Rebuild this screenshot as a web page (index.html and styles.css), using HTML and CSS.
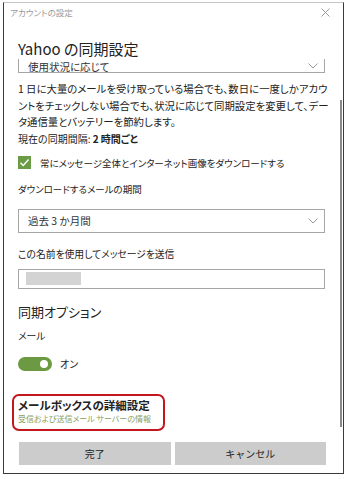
FILE: index.html
```html
<!DOCTYPE html>
<html lang="ja">
<head>
<meta charset="utf-8">
<title>アカウントの設定</title>
<link rel="stylesheet" href="styles.css">
</head>
<body>
<div class="window">
  <div class="titlebar">
    <span class="title">アカウントの設定</span>
    <svg class="close" width="9" height="9" viewBox="0 0 9 9"><path d="M0.5 0.5L8.5 8.5M8.5 0.5L0.5 8.5" stroke="#9a9a9a" stroke-width="1" fill="none"/></svg>
  </div>
  <h1 class="heading">Yahoo の同期設定</h1>
  <div class="scroll">
    <div class="content">
      <div class="select first">
        <span>使用状況に応じて</span>
        <svg class="chev" width="10" height="6" viewBox="0 0 10 6"><path d="M0.5 0.5L5 5L9.5 0.5" stroke="#9a9a9a" fill="none"/></svg>
      </div>
      <p class="desc">1 日に大量のメールを受け取っている場合でも、数日に一度しかアカウ<br>ントをチェックしない場合でも、状況に応じて同期設定を変更して、デー<br>タ通信量とバッテリーを節約します。</p>
      <p class="interval">現在の同期間隔: <b>2 時間ごと</b></p>
      <div class="check-row">
        <span class="checkbox"><svg width="13" height="13" viewBox="0 0 13 13"><path d="M2.5 6.8L5.2 9.4L10.6 3.6" stroke="#fff" stroke-width="1.4" fill="none"/></svg></span>
        <span>常にメッセージ全体とインターネット画像をダウンロードする</span>
      </div>
      <p class="label dl-label">ダウンロードするメールの期間</p>
      <div class="select period">
        <span>過去 3 か月間</span>
        <svg class="chev" width="10" height="6" viewBox="0 0 10 6"><path d="M0.5 0.5L5 5L9.5 0.5" stroke="#9a9a9a" fill="none"/></svg>
      </div>
      <p class="label name-label">この名前を使用してメッセージを送信</p>
      <div class="input"><span class="blur"></span></div>
      <h2 class="subheading">同期オプション</h2>
      <p class="label mail-label">メール</p>
      <div class="toggle-row">
        <span class="toggle"><span class="knob"></span></span>
        <span>オン</span>
      </div>
      <div class="advanced">
        <span class="adv-title">メールボックスの詳細設定</span>
        <span class="adv-sub">受信および送信メール サーバーの情報</span>
      </div>
    </div>
    <div class="thumb"></div>
  </div>
  <div class="footer">
    <button class="btn">完了</button>
    <button class="btn">キャンセル</button>
  </div>
</div>
</body>
</html>
```
FILE: styles.css
```css
html, body {
  margin: 0;
  padding: 0;
  background: #fff;
}
body {
  font-family: "Noto Sans CJK JP", "Noto Sans", sans-serif;
  color: #222;
  font-feature-settings: "palt";
}
.window {
  box-sizing: border-box;
  margin: 2px 0 0 3px;
  width: 341px;
  height: 472px;
  border: 1px solid #3a3a3a;
  border-top-color: #c4c4c4;
  display: flex;
  flex-direction: column;
  background: #fff;
}
.titlebar {
  height: 18px;
  flex: none;
  display: flex;
  align-items: center;
  justify-content: space-between;
  padding: 0 13px 0 6px;
}
.title {
  font-size: 8.5px;
  line-height: 11px;
  color: #9a9a9a;
}
.heading {
  flex: none;
  margin: 18px 0 0 14px;
  font-size: 15px;
  line-height: 20px;
  font-weight: 400;
  color: #222;
}
.scroll {
  flex: 1;
  position: relative;
  overflow: hidden;
}
.content {
  padding: 0 18px 0 14px;
  margin-top: -10px;
}
.select {
  box-sizing: border-box;
  height: 24px;
  border: 1px solid #a6a6a6;
  display: flex;
  align-items: center;
  justify-content: space-between;
  padding: 0 6px 0 9px;
  font-size: 10.5px;
  color: #333;
}
.first {
  align-items: flex-start;
  padding-top: 9px;
}
.first .chev {
  margin-top: 4px;
}
.desc {
  margin: 8px 0 0;
  font-size: 10.4px;
  line-height: 16.5px;
  white-space: nowrap;
}
.interval {
  margin: 0;
  font-size: 10px;
  line-height: 16px;
}
.interval b {
  font-weight: 700;
}
.check-row {
  margin-top: 9px;
  display: flex;
  align-items: center;
  gap: 9px;
  font-size: 9.5px;
  line-height: 14px;
}
.checkbox {
  width: 13px;
  height: 13px;
  background: #6a9c45;
  display: flex;
}
.label {
  margin: 0;
  font-size: 9.8px;
  line-height: 16px;
}
.dl-label { margin-top: 11px; font-size: 9.5px; }
.period { margin-top: 12px; }
.name-label { margin-top: 13px; }
.input {
  box-sizing: border-box;
  margin-top: 7px;
  height: 20px;
  border: 1px solid #a6a6a6;
  display: flex;
  align-items: center;
  padding-left: 7px;
}
.blur {
  width: 55px;
  height: 13px;
  background: #d3d3d3;
}
.subheading {
  margin: 13px 0 0;
  font-size: 13px;
  line-height: 20px;
  font-weight: 400;
}
.mail-label { margin-top: 6px; }
.toggle-row {
  margin-top: 13px;
  display: flex;
  align-items: center;
  gap: 8px;
  font-size: 10px;
  line-height: 14px;
}
.toggle {
  box-sizing: border-box;
  width: 34px;
  height: 14px;
  border-radius: 7px;
  background: #6b9a43;
  display: flex;
  align-items: center;
  justify-content: flex-end;
  padding-right: 4px;
}
.knob {
  width: 8px;
  height: 8px;
  border-radius: 50%;
  background: #fff;
}
.advanced {
  box-sizing: border-box;
  margin: 23px 0 0 -6px;
  width: 153px;
  height: 37px;
  border: 2px solid #c3161d;
  border-radius: 7px;
  padding: 1px 0 0 4px;
  display: flex;
  flex-direction: column;
}
.adv-title {
  font-size: 11.5px;
  line-height: 16px;
  font-weight: 700;
  color: #222;
}
.adv-sub {
  font-size: 8px;
  line-height: 12px;
  color: #8aa05e;
}
.thumb {
  position: absolute;
  right: 1px;
  top: 41px;
  width: 2px;
  height: 327px;
  background: #8a8a8a;
}
.footer {
  flex: none;
  display: grid;
  grid-template-columns: 1fr 1fr;
  gap: 4px;
  padding: 4px 17px 8px 15px;
}
.btn {
  height: 23px;
  border: none;
  background: #cccccc;
  font-family: inherit;
  font-size: 10px;
  color: #222;
  padding: 0;
}
```
